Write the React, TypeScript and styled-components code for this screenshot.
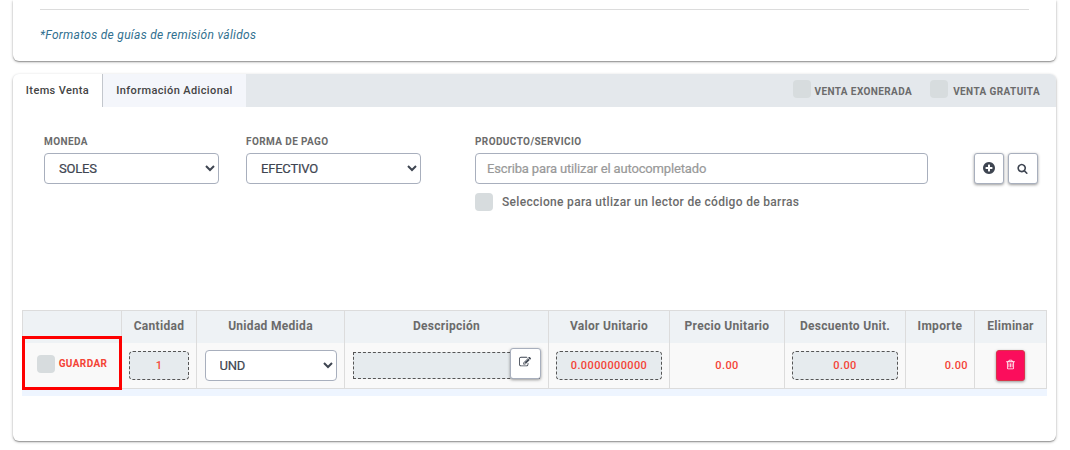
import React from "react";
import styled, { createGlobalStyle, css } from "styled-components";

const GlobalStyle = createGlobalStyle`
  *, *::before, *::after { box-sizing: border-box; }
  body {
    margin: 0;
    background: #fff;
    font-family: Roboto, "Liberation Sans", sans-serif;
    font-size: 12px;
    color: #6b6b6b;
  }
`;

const Page = styled.main`
  width: 1070px;
  height: 450px;
  padding: 0 14px 0 13px;
  overflow: hidden;
  display: flex;
  flex-direction: column;
  gap: 13px;
`;

const cardShadow = css`
  box-shadow: 0 1px 3px rgba(0, 0, 0, 0.3), 0 1px 1px rgba(0, 0, 0, 0.24);
`;

const GuideCard = styled.section`
  flex: none;
  height: 61px;
  padding: 9px 27px 0 27px;
  border-radius: 0 0 6px 6px;
  background: #fff;
  ${cardShadow}
`;

const GuideNote = styled.p`
  margin: 0;
  padding-top: 17px;
  border-top: 1px solid #dcdcdc;
  font-style: italic;
  line-height: 16px;
  letter-spacing: 0.3px;
  color: #31708f;
`;

const SaleCard = styled.section`
  flex: none;
  height: 367px;
  border-radius: 6px;
  background: #fff;
  ${cardShadow}
`;

const TabBar = styled.nav`
  display: flex;
  height: 33px;
  border-radius: 6px 6px 0 0;
  background: #e4e8ec;
  overflow: hidden;
`;

const Tab = styled.button<{ $active?: boolean; $width: number }>`
  width: ${(p) => p.$width}px;
  padding: 1px 0 0;
  border: 0;
  border-right: ${(p) => (p.$active ? "1px solid #c3c7cd" : "0")};
  background: ${(p) => (p.$active ? "#fff" : "#f4f6fb")};
  color: #444;
  font: 500 11px/16px Roboto, sans-serif;
  letter-spacing: 0.38px;
  white-space: nowrap;
`;

const TabOptions = styled.div`
  display: flex;
  margin-left: auto;
  padding: 6px 16px 0 0;
  gap: 18px;
`;

const CheckLabel = styled.label<{ $gap: number }>`
  display: flex;
  gap: ${(p) => p.$gap}px;
`;

const CheckBox = styled.span`
  flex: none;
  width: 18px;
  height: 18px;
  border-radius: 4px;
  background: #d7dcde;
`;

const Caps = styled.span<{ $top?: number; $red?: boolean }>`
  padding-top: ${(p) => p.$top ?? 0}px;
  font-size: 10px;
  font-weight: 700;
  line-height: 14px;
  letter-spacing: 0.4px;
  white-space: nowrap;
  color: ${(p) => (p.$red ? "#f44336" : "#6b6b6b")};
`;

const FormRow = styled.div`
  display: flex;
  height: 203px;
  padding: 28px 18px 0 31px;
`;

const Field = styled.div<{ $width: number; $after: number }>`
  display: flex;
  flex-direction: column;
  gap: 4px;
  width: ${(p) => p.$width}px;
  margin-right: ${(p) => p.$after}px;
`;

const controlStyle = css`
  border: 1px solid #a8afbd;
  border-radius: 4px;
  background: #fff;
  font: 400 13px Roboto, sans-serif;
`;

const Select = styled.select<{ $width: number }>`
  ${controlStyle}
  width: ${(p) => p.$width}px;
  height: 31px;
  padding: 0 0 0 10px;
  letter-spacing: -0.2px;
  color: #3e4551;
  -webkit-text-stroke: 0.2px currentColor;
`;

const SearchInput = styled.input`
  ${controlStyle}
  width: 453px;
  height: 31px;
  padding: 0 11px;
  letter-spacing: -0.15px;
  &::placeholder { color: #999; opacity: 1; -webkit-text-stroke: 0.2px currentColor; }
`;

const BarcodeLine = styled.div`
  display: flex;
  gap: 9px;
  margin-top: 5px;
  font-weight: 500;
  line-height: 18px;
  letter-spacing: 0.31px;
  white-space: nowrap;
`;

const ButtonGroup = styled.div`
  display: flex;
  gap: 4px;
  padding-top: 18px;
`;

const IconButton = styled.button<{ $danger?: boolean }>`
  display: flex;
  flex: none;
  align-items: center;
  justify-content: center;
  width: ${(p) => (p.$danger ? 29 : 30)}px;
  height: 31px;
  padding: 0 0 2px;
  border: 1px solid ${(p) => (p.$danger ? "#d9344a" : "#a8afbd")};
  border-radius: 3px;
  background: ${(p) => (p.$danger ? "#fb0d5c" : "#fff")};
  color: ${(p) => (p.$danger ? "#fff" : "#3e4551")};
  box-shadow: 0 1px 3px rgba(0, 0, 0, 0.4);
`;

const SearchButton = styled(IconButton)`
  padding: 0 1px 0 0;
`;

const Glyph = styled.svg`
  display: block;
  fill: currentColor;
`;

const ItemsTable = styled.div`
  width: 1025px;
  margin-left: 9px;
  border-top: 1px solid #dcdcdc;
  border-bottom: 7px solid #eef5ff;
`;

const TableRow = styled.div<{ $head?: boolean }>`
  display: grid;
  grid-template-columns: 100px 75px 148px 204px 121px 115px 121px 69px 72px;
  height: ${(p) => (p.$head ? 32 : 46)}px;
  background: ${(p) => (p.$head ? "#eef2f5" : "#f9f9f9")};
  border-bottom: ${(p) => (p.$head ? "0" : "1px solid #dcdcdc")};
  position: relative;
`;

const Cell = styled.div<{ $head?: boolean; $end?: boolean }>`
  display: flex;
  align-items: center;
  justify-content: ${(p) => (p.$end ? "flex-end" : "center")};
  padding: ${(p) => (p.$head ? "0 0 2px" : p.$end ? "0 6px 0 0" : "0")};
  border-right: 1px solid #dcdcdc;
  color: ${(p) => (p.$head ? "#6b6b6b" : "#f44336")};
  font-size: ${(p) => (p.$head ? 12 : 11)}px;
  font-weight: ${(p) => (p.$head ? 700 : 500)};
  letter-spacing: ${(p) => (p.$head ? 0.3 : 0.38)}px;
  white-space: nowrap;
  &:first-child { border-left: 1px solid #dcdcdc; }
`;

const SaveOption = styled(CheckLabel)`
  margin: -4px 0 0 0;
`;

const NumberBox = styled.div<{ $width: number }>`
  display: flex;
  align-items: center;
  justify-content: center;
  width: ${(p) => p.$width}px;
  height: 29px;
  border: 1px dashed #555;
  border-radius: 4px;
  background: #e6ebee;
`;

const DescriptionGroup = styled.div`
  display: flex;
  align-items: flex-start;
  width: 188px;
  margin-top: -5px;
`;

const DescriptionBox = styled.div`
  flex: 1;
  height: 27px;
  margin: 4px -30px 0 0;
  border: 1px dashed #555;
  background: #e6ebee;
`;

const EditButton = styled(IconButton)`
  width: 31px;
  position: relative;
`;

const Highlight = styled.div`
  position: absolute;
  left: 0;
  top: -7px;
  width: 100px;
  height: 54px;
  border: 3px solid #fe0000;
`;

const paths = {
  plus: "M1344 960v-128q0-26-19-45t-45-19h-256v-256q0-26-19-45t-45-19h-128q-26 0-45 19t-19 45v256h-256q-26 0-45 19t-19 45v128q0 26 19 45t45 19h256v256q0 26 19 45t45 19h128q26 0 45-19t19-45v-256h256q26 0 45-19t19-45zm320-64q0 209-103 385.5t-279.5 279.5-385.5 103-385.5-103-279.5-279.5-103-385.5 103-385.5 279.5-279.5 385.5-103 385.5 103 279.5 279.5 103 385.5z",
  search: "M1216 832q0-185-131.5-316.5t-316.5-131.5-316.5 131.5-131.5 316.5 131.5 316.5 316.5 131.5 316.5-131.5 131.5-316.5zm512 832q0 52-38 90t-90 38q-54 0-90-38l-343-342q-179 124-399 124-143 0-273.5-55.5t-225-150-150-225-55.5-273.5 55.5-273.5 150-225 225-150 273.5-55.5 273.5 55.5 225 150 150 225 55.5 273.5q0 220-124 399l343 343q37 37 37 90z",
  edit: "M888 1184l116-116-152-152-116 116v56h96v96h56zm440-720q-16-16-33 1l-350 350q-17 17-1 33t33-1l350-350q17-17 1-33zm80 594v190q0 119-84.5 203.5t-203.5 84.5h-832q-119 0-203.5-84.5t-84.5-203.5v-832q0-119 84.5-203.5t203.5-84.5h832q63 0 117 25 15 7 18 23 3 17-9 29l-49 49q-14 14-32 8-23-6-45-6h-832q-66 0-113 47t-47 113v832q0 66 47 113t113 47h832q66 0 113-47t47-113v-126q0-13 9-22l64-64q15-15 35-7t20 29zm-96-738l288 288-672 672h-288v-288zm444 132l-92 92-288-288 92-92q28-28 68-28t68 28l152 152q28 28 28 68t-28 68z",
  trash: "M704 736v576q0 14-9 23t-23 9h-64q-14 0-23-9t-9-23v-576q0-14 9-23t23-9h64q14 0 23 9t9 23zm256 0v576q0 14-9 23t-23 9h-64q-14 0-23-9t-9-23v-576q0-14 9-23t23-9h64q14 0 23 9t9 23zm256 0v576q0 14-9 23t-23 9h-64q-14 0-23-9t-9-23v-576q0-14 9-23t23-9h64q14 0 23 9t9 23zm128 724v-948h-896v948q0 22 7 40.5t14.5 27 10.5 8.5h832q3 0 10.5-8.5t14.5-27 7-40.5zm-672-1076h448l-48-117q-7-9-17-11h-317q-10 2-17 11zm928 32v64q0 14-9 23t-23 9h-96v948q0 83-47 143.5t-113 60.5h-832q-66 0-113-58.5t-47-141.5v-952h-96q-14 0-23-9t-9-23v-64q0-14 9-23t23-9h309l70-167q15-37 54-63t79-26h320q40 0 79 26t54 63l70 167h309q14 0 23 9t9 23z",
};

function Icon({ name, size }: { name: keyof typeof paths; size: number }) {
  return (
    <Glyph width={size} height={size} viewBox="0 0 1792 1792" aria-hidden="true">
      <path d={paths[name]} />
    </Glyph>
  );
}

const headings = [
  "",
  "Cantidad",
  "Unidad Medida",
  "Descripción",
  "Valor Unitario",
  "Precio Unitario",
  "Descuento Unit.",
  "Importe",
  "Eliminar",
];

export default function App() {
  return (
    <>
      <GlobalStyle />
      <Page>
        <GuideCard>
          <GuideNote>*Formatos de guías de remisión válidos</GuideNote>
        </GuideCard>
        <SaleCard>
          <TabBar>
            <Tab $active $width={90}>Items Venta</Tab>
            <Tab $width={143}>Información Adicional</Tab>
            <TabOptions>
              <CheckLabel $gap={4}>
                <CheckBox />
                <Caps $top={5}>VENTA EXONERADA</Caps>
              </CheckLabel>
              <CheckLabel $gap={5}>
                <CheckBox />
                <Caps $top={5}>VENTA GRATUITA</Caps>
              </CheckLabel>
            </TabOptions>
          </TabBar>
          <FormRow>
            <Field $width={175} $after={27}>
              <Caps>MONEDA</Caps>
              <Select $width={175}><option>SOLES</option></Select>
            </Field>
            <Field $width={175} $after={54}>
              <Caps>FORMA DE PAGO</Caps>
              <Select $width={175}><option>EFECTIVO</option></Select>
            </Field>
            <Field $width={453} $after={46}>
              <Caps>PRODUCTO/SERVICIO</Caps>
              <SearchInput placeholder="Escriba para utilizar el autocompletado" />
              <BarcodeLine>
                <CheckBox />
                <span>Seleccione para utlizar un lector de código de barras</span>
              </BarcodeLine>
            </Field>
            <ButtonGroup>
              <IconButton aria-label="Agregar"><Icon name="plus" size={14} /></IconButton>
              <SearchButton aria-label="Buscar"><Icon name="search" size={11} /></SearchButton>
            </ButtonGroup>
          </FormRow>
          <ItemsTable>
            <TableRow $head>
              {headings.map((h) => <Cell $head key={h}>{h}</Cell>)}
            </TableRow>
            <TableRow>
              <Cell>
                <SaveOption $gap={4}>
                  <CheckBox />
                  <Caps $top={2} $red>GUARDAR</Caps>
                </SaveOption>
              </Cell>
              <Cell><NumberBox $width={60}>1</NumberBox></Cell>
              <Cell><Select $width={132}><option>UND</option></Select></Cell>
              <Cell>
                <DescriptionGroup>
                  <DescriptionBox />
                  <EditButton aria-label="Editar"><Icon name="edit" size={12} /></EditButton>
                </DescriptionGroup>
              </Cell>
              <Cell><NumberBox $width={106}>0.0000000000</NumberBox></Cell>
              <Cell>0.00</Cell>
              <Cell><NumberBox $width={106}>0.00</NumberBox></Cell>
              <Cell $end>0.00</Cell>
              <Cell>
                <IconButton $danger aria-label="Eliminar"><Icon name="trash" size={11} /></IconButton>
              </Cell>
              <Highlight />
            </TableRow>
          </ItemsTable>
        </SaleCard>
      </Page>
    </>
  );
}
